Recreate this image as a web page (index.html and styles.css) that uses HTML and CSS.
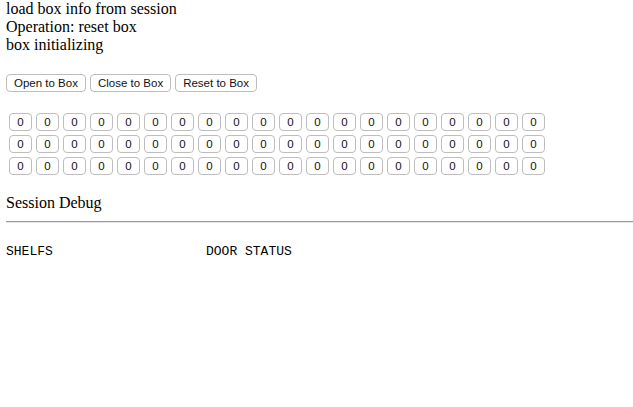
FILE: index.html
```html
<!DOCTYPE html>
<html lang="en">

<head>
    <meta charset="UTF-8" />
    <title>Box Session</title>
    <link rel="stylesheet" href="styles.css">
</head>

<body>
    <div class="page">
        <!-- status lines -->
        <div class="status">
            <div>load box info from session</div>
            <div>Operation: reset box</div>
            <div>box initializing</div>
        </div>

        <!-- actions -->
        <div class="actions">
            <button class="btn">Open to Box</button>
            <button class="btn">Close to Box</button>
            <button class="btn">Reset to Box</button>
        </div>

        <!-- shelf grid -->
        <div class="shelf-grid" id="grid"></div>

        <h2 class="debug-title">Session Debug</h2>
        <hr class="divider">

        <div class="debug-cols">
            <div class="debug-col">SHELFS</div>
            <div class="debug-col">DOOR STATUS</div>
        </div>
    </div>

    <script>
        const grid = document.getElementById('grid');
        for (let i = 0; i < 60; i++) {
            const b = document.createElement('button');
            b.className = 'cell';
            b.textContent = '0';
            grid.appendChild(b);
        }
    </script>
</body>

</html>
```

FILE: styles.css
```css
* {
    margin: 0;
    padding: 0;
    box-sizing: border-box;
}

html,
body {
    background: #fff;
    color: #000;
    font-family: "Liberation Serif", "Times New Roman", serif;
}

.page {
    padding-left: 6px;
}

.status {
    font-size: 16px;
    line-height: 18px;
}

/* кнопки */
.actions {
    display: flex;
    gap: 4px;
    margin-top: 20px;
}

.btn,
.cell {
    font-family: "Liberation Sans", Arial, sans-serif;
    font-size: 11.5px;
    color: #111;
    background: #fff;
    border: 1px solid #bdbdbd;
    border-radius: 4px;
    height: 18px;
    line-height: 16px;
}

.btn {
    padding: 0 7px;
}

.shelf-grid {
    display: grid;
    grid-template-columns: repeat(20, 23px);
    gap: 4px;
    margin: 21px 0 0 3px;
}

.cell {
    width: 23px;
    padding: 0;
}

.debug-title {
    font-size: 16px;
    font-weight: normal;
    line-height: 18px;
    margin-top: 19px;
}

.divider {
    border: none;
    border-top: 1px solid #9a9a9a;
    border-bottom: 1px solid #e6e6e6;
    margin-top: 9px;
}

.debug-cols {
    display: flex;
    margin-top: 21px;
    font-family: "Liberation Mono", "Courier New", monospace;
    font-size: 13px;
    line-height: 15px;
}

.debug-col {
    width: 200px;
}
```
